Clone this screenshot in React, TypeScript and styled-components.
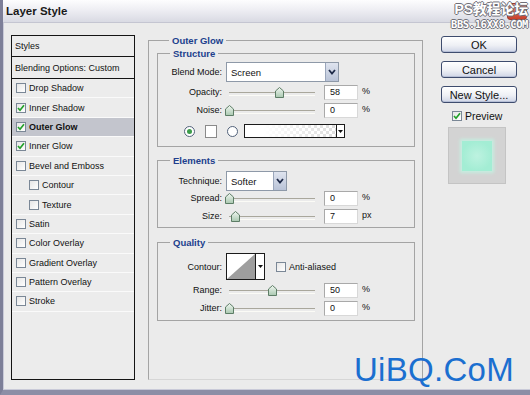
import styled, { createGlobalStyle } from "styled-components";

const GlobalStyle = createGlobalStyle`
  body {
    margin: 0;
    background: #ebebeb;
  }
  * {
    box-sizing: border-box;
  }
`;

const Window = styled.div`
  position: relative;
  width: 530px;
  height: 395px;
  overflow: hidden;
  display: flex;
  flex-direction: column;
  background: #ebebeb;
  border-left: 3px solid #7d7f98;
  border-bottom: 5px solid #8c8ea6;
  box-shadow: inset 1px -1px 0 #c9cad8;
  font-family: "Liberation Sans", Arial, sans-serif;
  font-size: 9px;
  color: #111;
`;

const TitleBar = styled.div`
  height: 23px;
  display: flex;
  align-items: center;
  padding-left: 3px;
  background: linear-gradient(#fdfdfe, #eeeef3 45%, #d9dae3);
  border-bottom: 1px solid #c4c5d1;
  font-size: 11.5px;
  font-weight: bold;
  color: #1a1a1a;
`;

const CloseButton = styled.div`
  position: absolute;
  top: 3px;
  right: 3px;
  width: 20px;
  height: 17px;
  border-radius: 3px;
  background: linear-gradient(#e98a7a, #c9402a);
  border: 1px solid #9a3a2a;
`;

const Watermark = styled.div`
  position: absolute;
  top: 1px;
  right: 2px;
  display: flex;
  flex-direction: column;
  align-items: flex-end;
  color: #fff;
  text-shadow: 1px 0 #6f6f78, -1px 0 #6f6f78, 0 1px #6f6f78, 0 -1px #6f6f78;
`;

const WatermarkTitle = styled.span`
  display: block;
  height: 17px;
  line-height: 17px;
  font-family: "Liberation Sans", "Noto Sans CJK SC", sans-serif;
  font-size: 14px;
  font-weight: bold;
  letter-spacing: -0.2px;
`;

const WatermarkSite = styled.span`
  display: block;
  height: 11px;
  line-height: 11px;
  margin-top: 1px;
  font-family: "DejaVu Sans Mono", monospace;
  font-size: 10.5px;
  font-weight: bold;
  letter-spacing: -0.4px;
`;

const SiteMark = styled.div`
  position: absolute;
  right: 16px;
  top: 353px;
  font-family: "Liberation Sans", Arial, sans-serif;
  font-size: 33px;
  line-height: 1;
  color: #1b6fd0;
  letter-spacing: 0.3px;
`;

const Body = styled.div`
  flex: 1;
  display: flex;
  align-items: flex-start;
  padding: 12px 0 0 8px;
`;

const StyleList = styled.div`
  width: 124px;
  height: 345px;
  border: 1px solid #141414;
  background: #ececec;
  display: flex;
  flex-direction: column;
`;

const ListHeader = styled.div<{ $h: number }>`
  height: ${(p) => p.$h}px;
  display: flex;
  align-items: center;
  padding-left: 3px;
  border-bottom: 1px solid #141414;
`;

const ListItem = styled.div<{ $active?: boolean; $indent?: boolean }>`
  height: 19.4px;
  display: flex;
  align-items: center;
  gap: 3px;
  padding-left: ${(p) => (p.$indent ? 17 : 4)}px;
  border-bottom: 1px solid #fafafa;
  background: ${(p) => (p.$active ? "#c3c5cd" : "transparent")};
  font-weight: ${(p) => (p.$active ? "bold" : "normal")};
`;

const Box = styled.span`
  width: 10px;
  height: 10px;
  flex: none;
  display: inline-flex;
  align-items: center;
  justify-content: center;
  border: 1px solid #7a8796;
  background: linear-gradient(135deg, #e6e6e6, #ffffff);
`;

const OuterGroup = styled.fieldset`
  margin: 0 0 0 13px;
  padding: 0 7px 0 8px;
  width: 275px;
  height: 345px;
  min-inline-size: 0;
  border: 1px solid #a4a4a4;
  border-bottom-color: #d6d6d6;
`;

const Group = styled.fieldset<{ $mt: number }>`
  margin: ${(p) => p.$mt}px 0 0;
  padding: 0;
  min-inline-size: 0;
  border: 1px solid #a4a4a4;
`;

const Legend = styled.legend`
  margin-left: 12px;
  padding: 0 3px;
  font-size: 9.5px;
  line-height: 11px;
  font-weight: bold;
  color: #213f8d;
`;

const GroupBody = styled.div<{ $pt: number; $pb: number }>`
  display: flex;
  flex-direction: column;
  padding: ${(p) => p.$pt}px 0 ${(p) => p.$pb}px;
`;

const FormRow = styled.div<{ $h: number }>`
  height: ${(p) => p.$h}px;
  display: grid;
  grid-template-columns: 64px 1fr;
  column-gap: 4px;
  align-items: center;
`;

const Label = styled.span`
  text-align: right;
  white-space: nowrap;
`;

const Controls = styled.div`
  display: flex;
  align-items: center;
`;

const Select = styled.div<{ $w: number }>`
  width: ${(p) => p.$w}px;
  height: 20px;
  display: flex;
  background: #fff;
  border: 1px solid #8e99a8;
`;

const SelectValue = styled.span`
  flex: 1;
  display: flex;
  align-items: center;
  padding-left: 4px;
  font-size: 9.5px;
`;

const SelectArrow = styled.span`
  width: 13px;
  display: flex;
  align-items: center;
  justify-content: center;
  border-left: 1px solid #9aa6bb;
  background: linear-gradient(#dfe4ef, #b9c3d7);
`;

const SliderTrack = styled.div`
  position: relative;
  width: 86px;
  height: 12px;
  margin-left: 3px;
  &::before {
    content: "";
    position: absolute;
    left: 0;
    right: 0;
    top: 6px;
    height: 2px;
    border-top: 1px solid #a9a79c;
    border-bottom: 1px solid #fbfbf6;
  }
`;

const Thumb = styled.svg`
  position: absolute;
  top: 1px;
  margin-left: -4px;
`;

const NumInput = styled.div`
  width: 34px;
  height: 15px;
  margin-left: 9px;
  display: flex;
  align-items: center;
  padding-left: 5px;
  background: #fff;
  border: 1px solid #a9a9a9;
  border-right-color: #d8d8d8;
  border-bottom-color: #d8d8d8;
`;

const Unit = styled.span`
  margin: -3px 0 0 4px;
`;

const ColorRow = styled.div`
  height: 18px;
  margin-top: 3px;
  display: flex;
  align-items: center;
  padding-left: 26px;
`;

const Radio = styled.span<{ $on?: boolean }>`
  width: 11px;
  height: 11px;
  border-radius: 50%;
  border: 1px solid #52627a;
  background: #fff;
  display: inline-flex;
  align-items: center;
  justify-content: center;
  &::after {
    content: "";
    width: 5px;
    height: 5px;
    border-radius: 50%;
    background: ${(p) => (p.$on ? "#3c9c4a" : "transparent")};
  }
`;

const Swatch = styled.span`
  width: 12px;
  height: 13px;
  margin: 0 10px 0 10px;
  background: #fff;
  border: 1px solid #8a8a8a;
`;

const GradientPicker = styled.div`
  width: 101px;
  height: 14px;
  margin-left: 6px;
  display: flex;
  border: 1px solid #1b1b1b;
  background: #fff;
`;

const GradientFill = styled.div`
  flex: 1;
  background: linear-gradient(to right, #fff 20%, rgba(255, 255, 255, 0.2)),
    repeating-conic-gradient(#d4d4d4 0 25%, #fff 0 50%) 0 0 / 6px 6px;
`;

const PickerArrow = styled.span<{ $w: number }>`
  width: ${(p) => p.$w}px;
  display: flex;
  align-items: center;
  justify-content: center;
  border-left: 1px solid #1b1b1b;
  background: #fff;
`;

const ContourPicker = styled.div`
  width: 39px;
  height: 27px;
  display: flex;
  border: 1px solid #1b1b1b;
  background: #fff;
`;

const CheckLabel = styled.label<{ $ml: number }>`
  display: flex;
  align-items: center;
  gap: 3px;
  margin-left: ${(p) => p.$ml}px;
`;

const RightColumn = styled.div`
  margin: 1px 0 0 18px;
  width: 76px;
  display: flex;
  flex-direction: column;
  gap: 8px;
`;

const Button = styled.button`
  height: 17px;
  padding: 0;
  border: 1px solid #3e4c6e;
  border-radius: 3px;
  background: linear-gradient(#ffffff, #eef0f5 55%, #cfd5e6);
  box-shadow: inset 0 -1px 0 #b6bfd6, inset 0 1px 0 #fff;
  font-family: "Liberation Sans", Arial, sans-serif;
  font-size: 11px;
  color: #111;
`;

const PreviewToggle = styled(CheckLabel)`
  font-size: 10.5px;
  height: 12px;
  margin-top: -1px;
`;

const PreviewBox = styled.div`
  width: 58px;
  height: 57px;
  margin: -3px 0 0 7px;
  display: flex;
  align-items: center;
  justify-content: center;
  background: #d3d3d3;
  border: 1px solid #c4c4c4;
`;

const GlowSquare = styled.div`
  width: 30px;
  height: 30px;
  background: radial-gradient(#bdf2e0, #a3edd4 70%);
  box-shadow: 0 0 3px 2px #c6eee0;
`;

const Check = () => (
  <svg width="8" height="8" viewBox="0 0 8 8">
    <path d="M1 4 L3 6.2 L7 1.2" fill="none" stroke="#22a12a" strokeWidth="1.7" />
  </svg>
);

function CheckBox({ checked }: { checked?: boolean }) {
  return <Box>{checked && <Check />}</Box>;
}

const ThumbIcon = ({ left }: { left: number }) => (
  <Thumb width="9" height="11" viewBox="0 0 9 11" style={{ left: `${left}%` }}>
    <defs>
      <linearGradient id="tg" x1="0" y1="0" x2="0" y2="1">
        <stop offset="0" stopColor="#f1f7f1" />
        <stop offset="1" stopColor="#a9c8b0" />
      </linearGradient>
    </defs>
    <path d="M0.5 4 L4.5 0.5 L8.5 4 L8.5 10.5 L0.5 10.5 Z" fill="url(#tg)" stroke="#5d7d66" />
  </Thumb>
);

const Chevron = () => (
  <svg width="8" height="6" viewBox="0 0 8 6">
    <path d="M1 1 L4 4.5 L7 1" fill="none" stroke="#1e2a48" strokeWidth="1.8" />
  </svg>
);

const SmallTriangle = () => (
  <svg width="5" height="3" viewBox="0 0 5 3">
    <path d="M0 0 H5 L2.5 3 Z" fill="#111" />
  </svg>
);

function SliderField({ label, value, unit }: { label: string; value: number; unit: string }) {
  return (
    <FormRow $h={18}>
      <Label>{label}</Label>
      <Controls>
        <SliderTrack>
          <ThumbIcon left={value} />
        </SliderTrack>
        <NumInput>{value}</NumInput>
        <Unit>{unit}</Unit>
      </Controls>
    </FormRow>
  );
}

const effects = [
  { name: "Drop Shadow" },
  { name: "Inner Shadow", checked: true },
  { name: "Outer Glow", checked: true, active: true },
  { name: "Inner Glow", checked: true },
  { name: "Bevel and Emboss" },
  { name: "Contour", indent: true },
  { name: "Texture", indent: true },
  { name: "Satin" },
  { name: "Color Overlay" },
  { name: "Gradient Overlay" },
  { name: "Pattern Overlay" },
  { name: "Stroke" },
];

export default function App() {
  return (
    <Window>
      <GlobalStyle />
      <TitleBar>Layer Style</TitleBar>
      <CloseButton />
      <Watermark>
        <WatermarkTitle>PS教程论坛</WatermarkTitle>
        <WatermarkSite>BBS.16XX8.COM</WatermarkSite>
      </Watermark>

      <Body>
        <StyleList>
          <ListHeader $h={21}>Styles</ListHeader>
          <ListHeader $h={22}>Blending Options: Custom</ListHeader>
          {effects.map((e) => (
            <ListItem key={e.name} $active={e.active} $indent={e.indent}>
              <CheckBox checked={e.checked} />
              {e.name}
            </ListItem>
          ))}
        </StyleList>

        <OuterGroup>
          <Legend>Outer Glow</Legend>

          <Group $mt={2}>
            <Legend>Structure</Legend>
            <GroupBody $pt={2} $pb={6}>
              <FormRow $h={22}>
                <Label>Blend Mode:</Label>
                <Select $w={113}>
                  <SelectValue>Screen</SelectValue>
                  <SelectArrow>
                    <Chevron />
                  </SelectArrow>
                </Select>
              </FormRow>
              <SliderField label="Opacity:" value={58} unit="%" />
              <SliderField label="Noise:" value={0} unit="%" />
              <ColorRow>
                <Radio $on />
                <Swatch />
                <Radio />
                <GradientPicker>
                  <GradientFill />
                  <PickerArrow $w={8}>
                    <SmallTriangle />
                  </PickerArrow>
                </GradientPicker>
              </ColorRow>
            </GroupBody>
          </Group>

          <Group $mt={8}>
            <Legend>Elements</Legend>
            <GroupBody $pt={5} $pb={2}>
              <FormRow $h={18}>
                <Label>Technique:</Label>
                <Select $w={61}>
                  <SelectValue>Softer</SelectValue>
                  <SelectArrow>
                    <Chevron />
                  </SelectArrow>
                </Select>
              </FormRow>
              <SliderField label="Spread:" value={0} unit="%" />
              <SliderField label="Size:" value={7} unit="px" />
            </GroupBody>
          </Group>

          <Group $mt={9}>
            <Legend>Quality</Legend>
            <GroupBody $pt={4} $pb={3}>
              <FormRow $h={29}>
                <Label>Contour:</Label>
                <Controls>
                  <ContourPicker>
                    <svg width="28" height="25" viewBox="0 0 28 25">
                      <path d="M0 25 L28 0 L28 25 Z" fill="#9e9e9e" />
                    </svg>
                    <PickerArrow $w={9}>
                      <SmallTriangle />
                    </PickerArrow>
                  </ContourPicker>
                  <CheckLabel $ml={11}>
                    <CheckBox />
                    Anti-aliased
                  </CheckLabel>
                </Controls>
              </FormRow>
              <SliderField label="Range:" value={50} unit="%" />
              <SliderField label="Jitter:" value={0} unit="%" />
            </GroupBody>
          </Group>
        </OuterGroup>

        <RightColumn>
          <Button>OK</Button>
          <Button>Cancel</Button>
          <Button>New Style...</Button>
          <PreviewToggle $ml={11}>
            <CheckBox checked />
            Preview
          </PreviewToggle>
          <PreviewBox>
            <GlowSquare />
          </PreviewBox>
        </RightColumn>
      </Body>

      <SiteMark>UiBQ.CoM</SiteMark>
    </Window>
  );
}
